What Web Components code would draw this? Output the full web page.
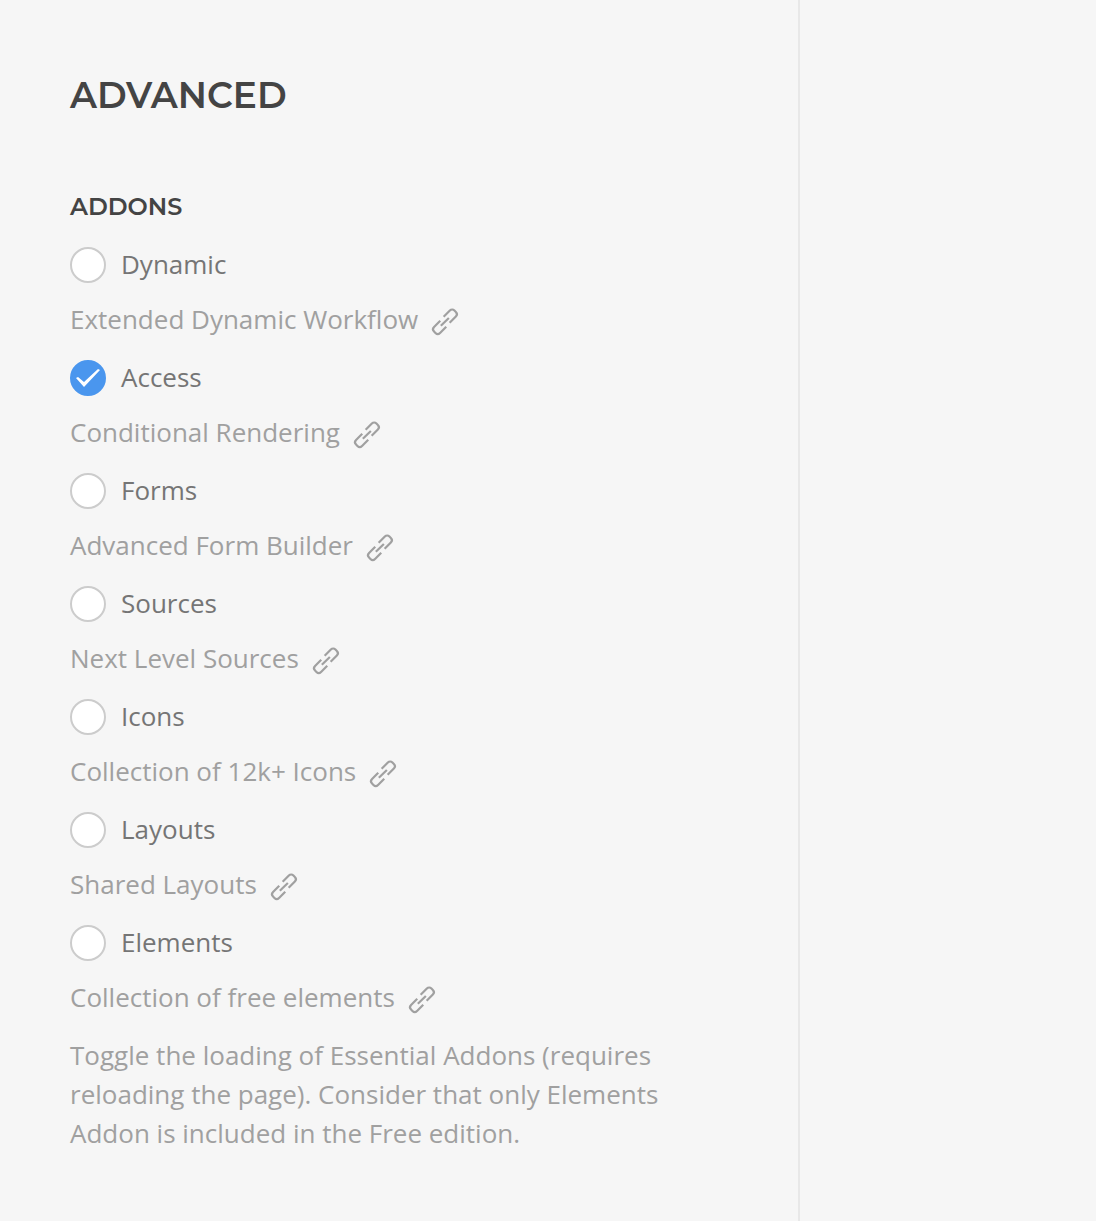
<!DOCTYPE html>
<html lang="en">
<head>
<meta charset="utf-8">
<meta name="viewport" content="width=device-width, initial-scale=1">
<title>Advanced</title>
<style>
  body { margin: 0; min-height: 100vh; display: flex; background: #f6f6f6; }
  settings-panel { flex: 0 1 800px; }
</style>
</head>
<body>
<settings-panel>
  <span slot="title">ADVANCED</span>
  <addon-list>
    <span slot="title">ADDONS</span>
    <addon-item name="Dynamic">Extended Dynamic Workflow</addon-item>
    <addon-item name="Access" checked>Conditional Rendering</addon-item>
    <addon-item name="Forms">Advanced Form Builder</addon-item>
    <addon-item name="Sources">Next Level Sources</addon-item>
    <addon-item name="Icons">Collection of 12k+ Icons</addon-item>
    <addon-item name="Layouts">Shared Layouts</addon-item>
    <addon-item name="Elements">Collection of free elements</addon-item>
    <span slot="help">Toggle the loading of Essential Addons (requires reloading the page). Consider that only Elements Addon is included in the Free edition.</span>
  </addon-list>
</settings-panel>

<template id="panel">
  <style>
    :host { display: block; box-sizing: border-box; min-width: 0; padding: 71px 70px 60px; border-right: 2px solid #e8e8e8; color: #444; font-family: "Open Sans", sans-serif; font-size: 26px; line-height: 39px; }
    h1 { margin: 0 0 68px; font: 600 36px/48px Montserrat, Inter, sans-serif; }
  </style>
  <h1><slot name="title"></slot></h1>
  <slot></slot>
</template>

<template id="list">
  <style>
    :host { display: block; }
    h2 { margin: 0 0 18px; font: 600 24px/40px Montserrat, Inter, sans-serif; }
    .items { display: flex; flex-direction: column; gap: 19px; }
    p { margin: 19px 0 0; color: #a0a0a0; }
  </style>
  <h2><slot name="title"></slot></h2>
  <div class="items"><slot></slot></div>
  <p><slot name="help"></slot></p>
</template>

<template id="item">
  <style>
    :host { display: flex; flex-direction: column; gap: 16px; }
    label { display: flex; align-items: center; align-self: flex-start; gap: 15px; color: #757575; }
    input { appearance: none; box-sizing: border-box; flex: none; width: 36px; height: 36px; margin: 0; border: 2px solid #ccc; border-radius: 50%; background: #fff; }
    .box { display: grid; }
    .box > * { grid-area: 1 / 1; }
    .box svg { width: 36px; height: 36px; visibility: hidden; pointer-events: none; z-index: 1; }
    input:checked { border-color: #4a96ee; background: #4a96ee; }
    input:checked + svg { visibility: visible; }
    .description { display: flex; align-items: center; gap: 7px; color: #a0a0a0; }
    a { display: flex; box-sizing: border-box; height: 39px; padding-top: 4px; align-items: center; color: #a0a0a0; }
    a svg { width: 40px; height: 40px; }
  </style>
  <label>
    <span class="box">
      <input type="checkbox">
      <svg viewBox="0 0 36 36" fill="#fff" aria-hidden="true"><path d="M28 9 14 22 8 17 6 18 14 27 30 10Z"/></svg>
    </span>
    <span class="name"></span>
  </label>
  <div class="description">
    <span><slot></slot></span>
    <a href="#"><svg viewBox="0 0 20 20" fill="none" stroke="currentColor" stroke-width="1.1" aria-hidden="true">
      <path d="M10.625,12.375 L7.525,15.475 C6.825,16.175 5.925,16.175 5.225,15.475 L4.525,14.775 C3.825,14.074 3.825,13.175 4.525,12.475 L7.625,9.375"/>
      <path d="M9.325,7.375 L12.425,4.275 C13.125,3.575 14.025,3.575 14.724,4.275 L15.425,4.975 C16.125,5.675 16.125,6.575 15.425,7.275 L12.325,10.375"/>
      <path d="M7.925,11.875 L11.925,7.975"/>
    </svg></a>
  </div>
</template>

<script>
  class TemplateElement extends HTMLElement {
    constructor() {
      super();
      const template = document.getElementById(this.constructor.template);
      this.attachShadow({ mode: "open" }).append(template.content.cloneNode(true));
    }
  }
  class SettingsPanel extends TemplateElement { static template = "panel"; }
  class AddonList extends TemplateElement { static template = "list"; }
  class AddonItem extends TemplateElement {
    static template = "item";
    connectedCallback() {
      const name = this.getAttribute("name");
      this.shadowRoot.querySelector(".name").textContent = name;
      this.shadowRoot.querySelector("input").checked = this.hasAttribute("checked");
      this.shadowRoot.querySelector("a").setAttribute("aria-label", name + " documentation");
    }
  }
  customElements.define("settings-panel", SettingsPanel);
  customElements.define("addon-list", AddonList);
  customElements.define("addon-item", AddonItem);
</script>
</body>
</html>
